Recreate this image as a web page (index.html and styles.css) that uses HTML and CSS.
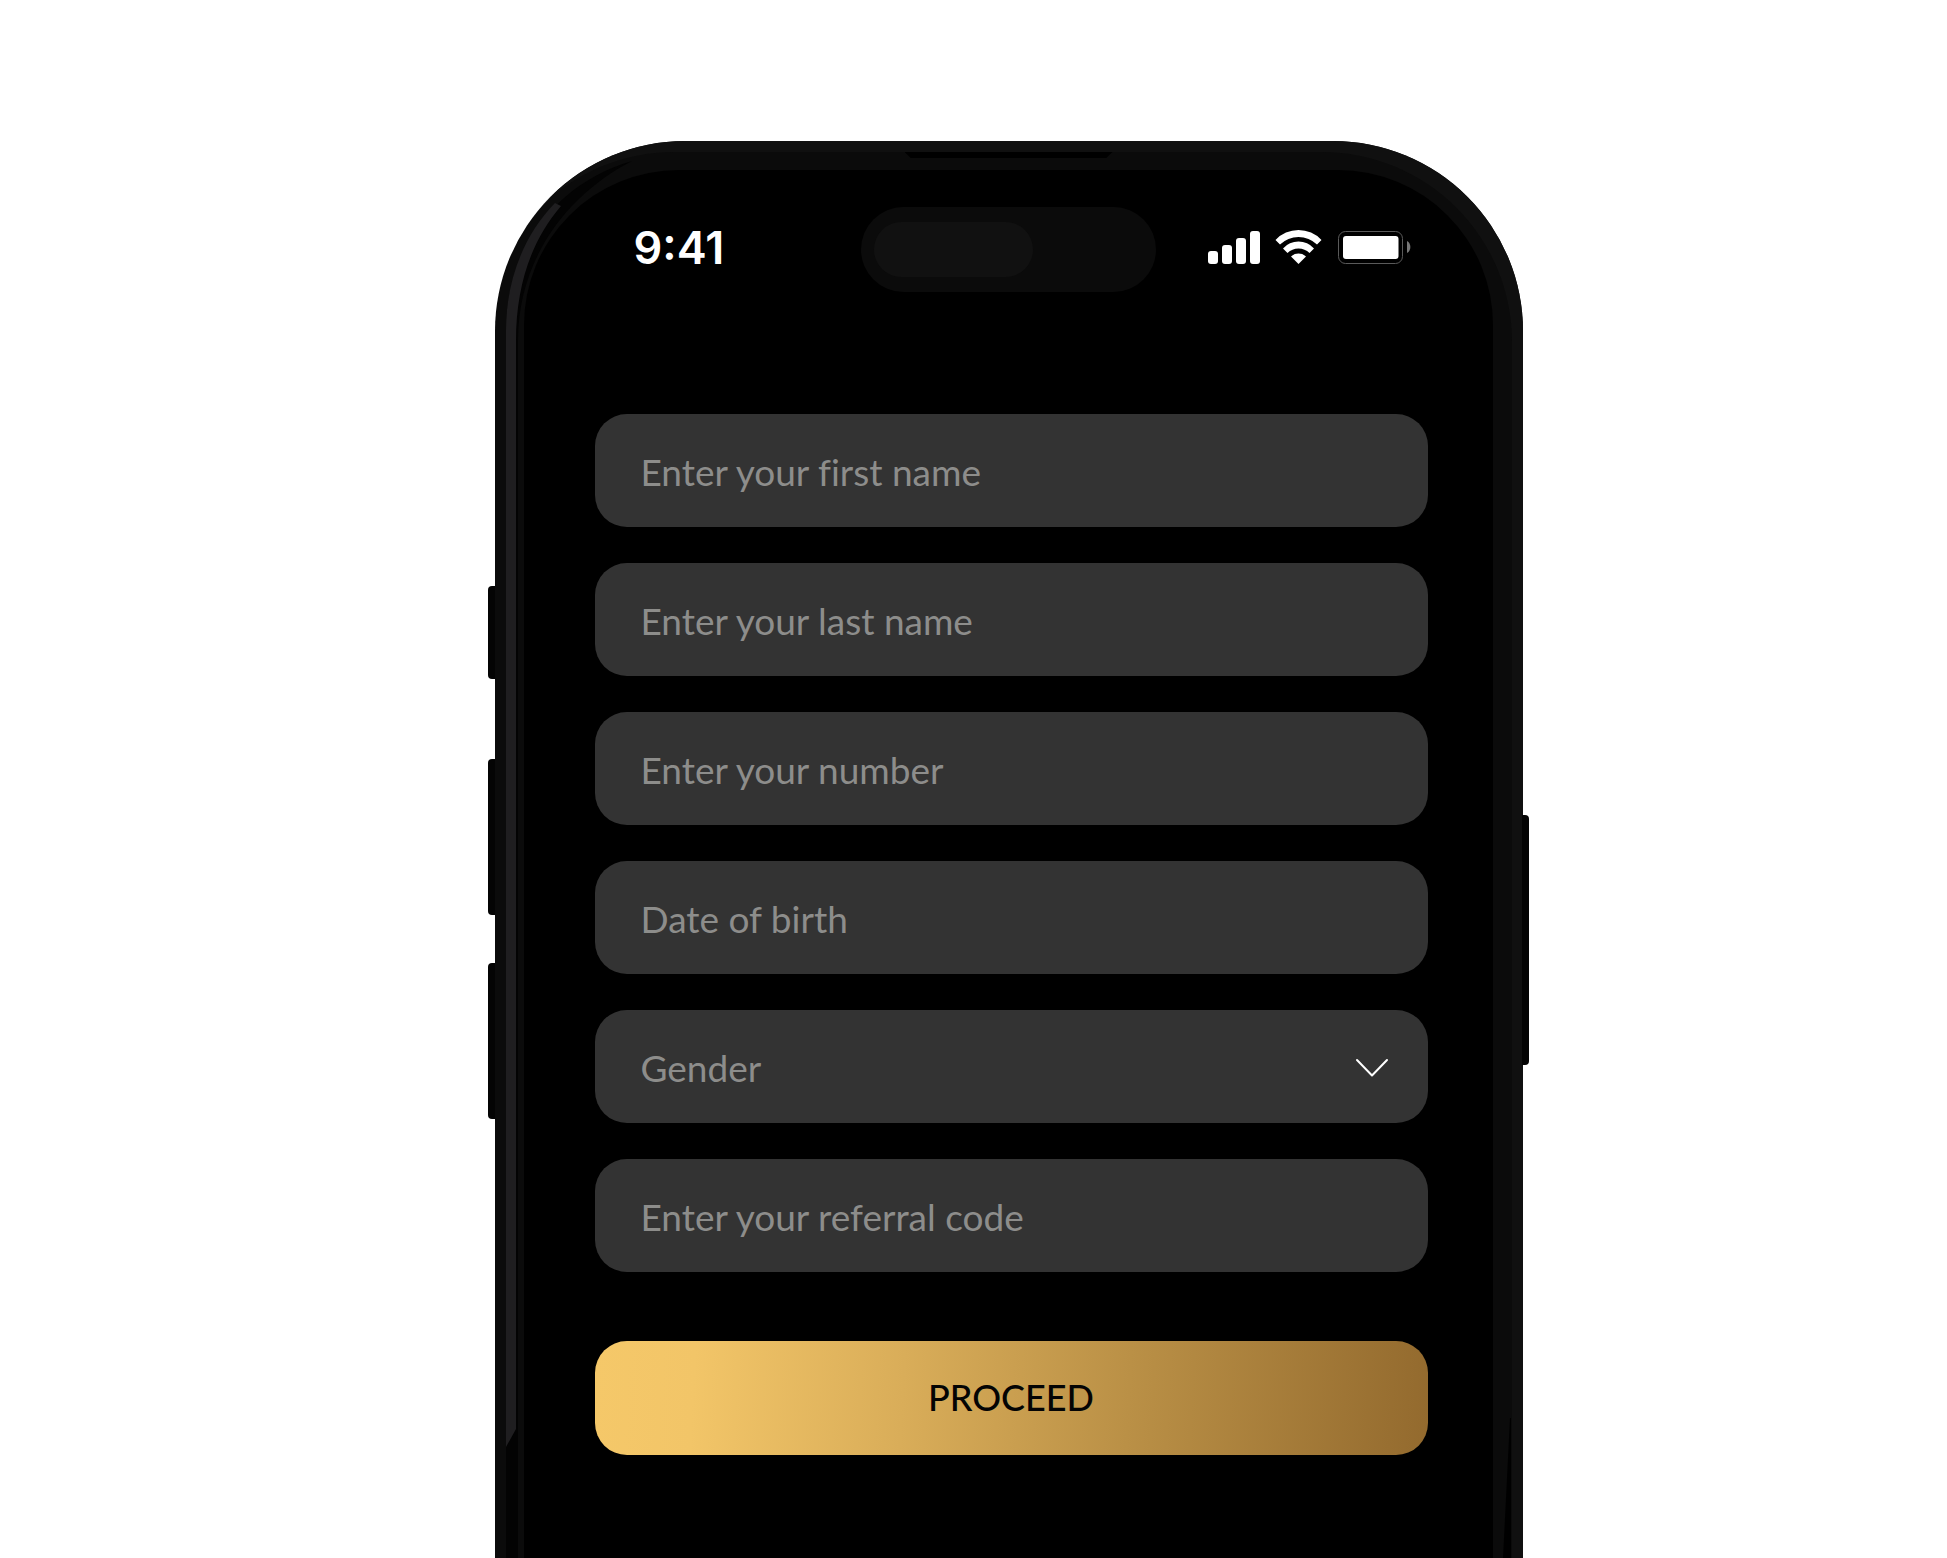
FILE: index.html
```html
<!DOCTYPE html>
<html lang="en">
<head>
  <meta charset="UTF-8" />
  <meta name="viewport" content="width=device-width, initial-scale=1.0"/>
  <title>Personal details</title>
  <link rel="stylesheet" href="styles.css">
</head>
<body>
  <div class="phone">
    <!-- side buttons -->
    <span class="side-btn action"></span>
    <span class="side-btn volume-up"></span>
    <span class="side-btn volume-down"></span>
    <span class="side-btn power"></span>

    <!-- reflections on the metal frame -->
    <svg class="shine shine-left" width="180" height="1417" viewBox="0 0 180 1417" aria-hidden="true">
      <path d="M11 1417V190C11 110 60 42 137 20C75 52 23 115 23 200V1417Z" fill="#030303"/>
      <path d="M11 1306V190C11 140 28 95 60 62L66 65C36 100 21 145 21 200V1288Z" fill="#1f1e20"/>
    </svg>
    <svg class="shine shine-right" width="30" height="140" viewBox="0 0 30 140" aria-hidden="true">
      <path d="M17 0L10 140H18L18 0Z" fill="#000"/>
    </svg>
    <span class="speaker"></span>

    <div class="screen">
      <div class="status-bar">
        <span class="time">9:41</span>
        <div class="island"><span class="sensor"></span></div>
        <svg class="status-icons" width="203" height="34" viewBox="28 30 203 34" aria-hidden="true">
          <g fill="#fff">
            <rect x="28" y="51" width="10" height="13" rx="3"/>
            <rect x="42" y="45" width="10" height="19" rx="3"/>
            <rect x="56" y="38" width="10" height="26" rx="3"/>
            <rect x="70" y="31" width="10" height="33" rx="3"/>
            <path d="M95.5 40A31.5 31.5 0 0 1 141.5 40L137 44.5A26.6 26.6 0 0 0 100 44.5Z"/>
            <path d="M103 48.5A20.7 20.7 0 0 1 134 48.5L129.5 53A15.7 15.7 0 0 0 107.5 53Z"/>
            <path d="M111 56.5A11 11 0 0 1 126 56.5L118.5 64Z"/>
            <rect x="163" y="36" width="55.5" height="23" rx="3"/>
          </g>
          <rect x="158.5" y="31.5" width="64" height="32" rx="7" fill="none" stroke="#5a5a5a"/>
          <path d="M227 41C231.500 43 231.500 51 227 53Z" fill="#777"/>
        </svg>
      </div>

      <form class="details-form">
        <input class="field" type="text" placeholder="Enter your first name" aria-label="First name" />
        <input class="field" type="text" placeholder="Enter your last name" aria-label="Last name" />
        <input class="field" type="tel" placeholder="Enter your number" aria-label="Number" />
        <input class="field" type="text" placeholder="Date of birth" aria-label="Date of birth" />
        <div class="select-wrap">
          <select class="field" aria-label="Gender">
            <option>Gender</option>
          </select>
          <svg class="chevron" width="34" height="20" viewBox="0 0 34 20" aria-hidden="true">
            <path d="M2 2L17 17.500L32 2" fill="none" stroke="#fff" stroke-width="2" stroke-linecap="round" stroke-linejoin="round"/>
          </svg>
        </div>
        <input class="field" type="text" placeholder="Enter your referral code" aria-label="Referral code" />
        <button class="proceed-btn" type="button">PROCEED</button>
      </form>
    </div>
  </div>
</body>
</html>
```

FILE: styles.css
```css
* {
  box-sizing: border-box;
}

body {
  margin: 0;
  padding: 141px 0 0 70px;
  min-height: 100vh;
  display: flex;
  justify-content: center;
  background-color: #fff;
  font-family: Lato, "Liberation Sans", sans-serif;
}

.phone {
  position: relative;
  display: flex;
  width: 100%;
  max-width: 1028px;
  padding: 29px 30px 0 29px;
  border-radius: 190px 190px 0 0;
  background-color: #0b0b0b;
  box-shadow: inset -11px 11px 0 #101010;
}

/* side buttons */
.side-btn {
  position: absolute;
  left: -7px;
  width: 7px;
  height: 156px;
  border-radius: 4px 0 0 4px;
  background-color: #040404;
}

.action {
  top: 445px;
  height: 93px;
}

.volume-up {
  top: 618px;
}

.volume-down {
  top: 822px;
}

.power {
  top: 674px;
  left: auto;
  right: -6px;
  height: 250px;
  border-radius: 0 4px 4px 0;
}

/* frame details */
.shine {
  position: absolute;
}

.shine-left {
  top: 0;
  left: 0;
}

.shine-right {
  right: 0;
  bottom: 0;
}

.speaker {
  position: absolute;
  top: 11px;
  left: 50%;
  width: 208px;
  height: 6px;
  margin-left: -104px;
  background-color: #000;
  clip-path: polygon(0 0, 100% 0, 97% 100%, 3% 100%);
}

.screen {
  flex: 1;
  padding-top: 37px;
  border-radius: 155px 155px 0 0;
  background-color: #000;
}

/* status bar */
.status-bar {
  display: grid;
  grid-template-columns: 1fr auto 1fr;
  align-items: center;
}

.time {
  padding: 0 0 4px 110px;
  color: #fff;
  font-family: Inter, sans-serif;
  font-size: 45px;
  font-weight: 600;
  line-height: 56px;
}

.island {
  width: 295px;
  height: 85px;
  padding: 15px 13px;
  border-radius: 43px;
  background-color: #0b0b0b;
}

.sensor {
  display: block;
  width: 159px;
  height: 55px;
  border-radius: 28px;
  background-color: #111;
}

.status-icons {
  justify-self: end;
  margin: 0 82px 6px 0;
}

/* form */
.details-form {
  display: flex;
  flex-direction: column;
  gap: 36px;
  padding: 122px 65px 0 71px;
}

.field {
  display: block;
  width: 100%;
  height: 113px;
  margin: 0;
  padding: 2px 46px 0;
  border: none;
  border-radius: 32px;
  outline: none;
  appearance: none;
  background-color: #333;
  color: #8d8d8b;
  font-family: inherit;
  font-size: 37px;
  font-variant-ligatures: none;
}

.field::placeholder {
  color: #8d8d8b;
  opacity: 1;
}

.select-wrap {
  position: relative;
}

.chevron {
  position: absolute;
  top: 48px;
  right: 39px;
  pointer-events: none;
}

.proceed-btn {
  height: 114px;
  margin-top: 33px;
  padding: 0 0 3px;
  border: none;
  border-radius: 32px;
  background: linear-gradient(93deg, #f5c869 0%, #f2c568 12%, #d9ad59 37%, #ba9046 64%, #936a2e 100%);
  color: #040404;
  font-family: inherit;
  font-size: 36px;
  font-weight: 500;
  cursor: pointer;
}
```
